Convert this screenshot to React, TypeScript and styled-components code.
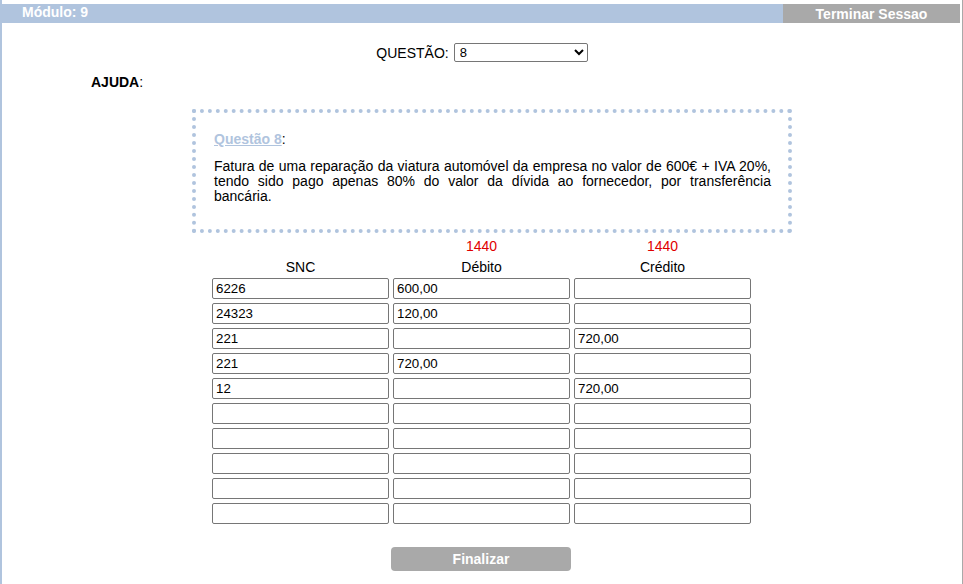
import React from 'react';
import styled, { createGlobalStyle } from 'styled-components';

const GlobalStyle = createGlobalStyle`
  html, body {
    margin: 0;
    padding: 0;
    background: #ffffff;
    font-family: Arial, "Liberation Sans", Helvetica, sans-serif;
    font-size: 14px;
    color: #000;
  }
`;

const Page = styled.div`
  padding-top: 4px;
  min-height: 580px;
  border-left: 2px solid #b0c4de;
  border-right: 1px solid #a9a9a9;
`;

const TopBar = styled.div`
  display: flex;
  align-items: stretch;
  height: 19px;
  background: #b0c4de;
  margin-left: -2px;
  margin-right: 2px;
`;

const ModuleTitle = styled.div`
  flex: 1;
  padding-left: 22px;
  color: #fff;
  font-weight: bold;
  font-size: 14px;
  line-height: 17px;
`;

const LogoutButton = styled.div`
  width: 177px;
  background: #a9a9a9;
  color: #fff;
  font-weight: bold;
  font-size: 14px;
  text-align: center;
  line-height: 21px;
`;

const QuestionPicker = styled.div`
  display: flex;
  justify-content: center;
  align-items: center;
  gap: 5px;
  margin-top: 20px;
  font-size: 14px;
  line-height: 16px;
`;

const Select = styled.select`
  width: 134px;
  height: 19px;
  font-family: Arial, "Liberation Sans", sans-serif;
  font-size: 13px;
  padding: 0 1px;
  border: 1px solid #767676;
  border-radius: 2px;
  background: #fff;
`;

const HelpLabel = styled.div`
  margin: 12px 0 0 89px;
  font-size: 14px;
  line-height: 16px;
  b {
    font-weight: bold;
  }
`;

const HelpBox = styled.div`
  width: 600px;
  height: 124px;
  margin: 19px 0 0 190px;
  border: 4px dotted #b0c4de;
  padding: 18px 17px 17px 18px;
  box-sizing: border-box;
  line-height: 16px;
`;

const QuestionLink = styled.a`
  color: #b0c4de;
  font-weight: bold;
  text-decoration: underline;
`;

const QuestionText = styled.p`
  margin: 12px 0 0 0;
  text-align: justify;
  font-size: 14px;
  line-height: 15px;
`;

const Ledger = styled.div`
  width: 544px;
  margin: 6px 0 0 210px;
  display: grid;
  grid-template-columns: repeat(3, 177px);
  column-gap: 4px;
  row-gap: 4px;
`;

const Total = styled.div`
  text-align: center;
  color: #e00000;
  height: 15px;
  line-height: 15px;
`;

const ColumnHead = styled.div`
  text-align: center;
  line-height: 15px;
  margin-top: 2px;
  margin-bottom: -1px;
`;

const Cell = styled.input`
  width: 177px;
  height: 21px;
  box-sizing: border-box;
  border: 1px solid #767676;
  border-radius: 2px;
  padding: 0 3px;
  font-family: Arial, "Liberation Sans", sans-serif;
  font-size: 13.3px;
  color: #000;
`;

const Footer = styled.div`
  display: flex;
  justify-content: center;
  margin-top: 23px;
  margin-left: -2px;
`;

const FinishButton = styled.button`
  width: 180px;
  height: 24px;
  border: none;
  border-radius: 4px;
  background: #a9a9a9;
  color: #fff;
  font-weight: bold;
  font-family: Arial, "Liberation Sans", sans-serif;
  font-size: 14px;
`;

const rows: [string, string, string][] = [
  ['6226', '600,00', ''],
  ['24323', '120,00', ''],
  ['221', '', '720,00'],
  ['221', '720,00', ''],
  ['12', '', '720,00'],
  ['', '', ''],
  ['', '', ''],
  ['', '', ''],
  ['', '', ''],
  ['', '', ''],
];

export default function App() {
  return (
    <>
      <GlobalStyle />
      <Page>
        <TopBar>
          <ModuleTitle>Módulo: 9</ModuleTitle>
          <LogoutButton>Terminar Sessao</LogoutButton>
        </TopBar>

        <QuestionPicker>
          <span>QUESTÃO:</span>
          <Select defaultValue="8">
            {Array.from({ length: 12 }, (_, i) => (
              <option key={i} value={String(i + 1)}>
                {i + 1}
              </option>
            ))}
          </Select>
        </QuestionPicker>

        <HelpLabel>
          <b>AJUDA</b>:
        </HelpLabel>

        <HelpBox>
          <QuestionLink href="#">Questão 8</QuestionLink>:
          <QuestionText>
            Fatura de uma reparação da viatura automóvel da empresa no valor de 600€ + IVA 20%,
            tendo sido pago apenas 80% do valor da dívida ao fornecedor, por transferência
            bancária.
          </QuestionText>
        </HelpBox>

        <Ledger>
          <Total />
          <Total>1440</Total>
          <Total>1440</Total>
          <ColumnHead>SNC</ColumnHead>
          <ColumnHead>Débito</ColumnHead>
          <ColumnHead>Crédito</ColumnHead>
          {rows.map((row, i) =>
            row.map((value, j) => <Cell key={`${i}-${j}`} defaultValue={value} />)
          )}
        </Ledger>

        <Footer>
          <FinishButton>Finalizar</FinishButton>
        </Footer>
      </Page>
    </>
  );
}
